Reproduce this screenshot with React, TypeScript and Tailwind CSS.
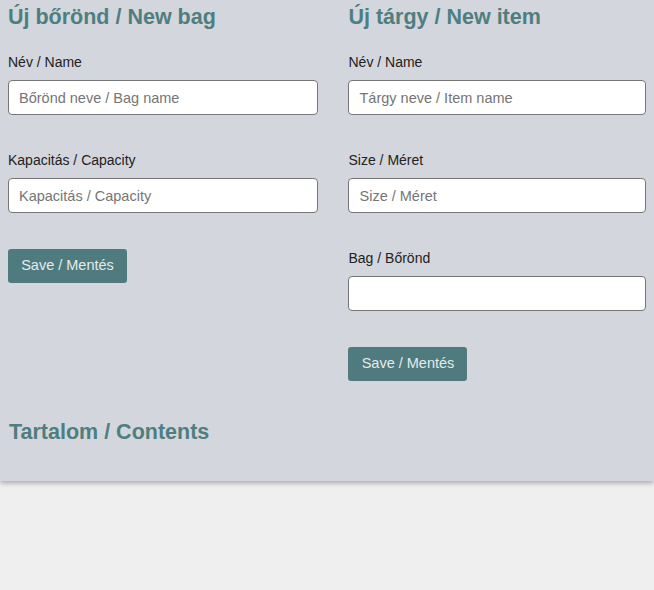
import React from "react";

const font = { fontFamily: '"Liberation Sans", Arial, sans-serif' };

function Label({ children }: { children: React.ReactNode }) {
  return <div className="h-[16px] text-[14px] leading-[16px] text-[#222]">{children}</div>;
}

function Input({ placeholder }: { placeholder?: string }) {
  return (
    <input
      placeholder={placeholder}
      className="mt-[10px] block h-[35px] w-full rounded-[4px] border border-[#767676] bg-white px-[10px] text-[14.5px] text-[#222] placeholder:text-[#757575] outline-none"
      style={font}
    />
  );
}

function Button() {
  return (
    <button
      className="block h-[34px] w-[119px] rounded-[3px] bg-[#4f7b7e] text-[14.5px] text-[#e3ecec]"
      style={font}
    >
      Save / Mentés
    </button>
  );
}

export default function App() {
  return (
    <div className="min-h-[590px] bg-[#efefef]" style={font}>
      <div className="bg-[#d3d6dc] pb-[36px] shadow-[0_2px_5px_rgba(0,0,0,0.3)]">
        <div className="flex px-[8px] pt-[4px]">
          <div className="w-[311px]">
            <h2 className="text-[21.5px] font-bold leading-[26px] text-[#4f7e80]">Új bőrönd / New bag</h2>
            <div className="mt-[24px]">
              <Label>Név / Name</Label>
              <Input placeholder="Bőrönd neve / Bag name" />
            </div>
            <div className="mt-[37px]">
              <Label>Kapacitás / Capacity</Label>
              <Input placeholder="Kapacitás / Capacity" />
            </div>
            <div className="mt-[36px]">
              <Button />
            </div>
          </div>
          <div className="ml-[30px] w-[298px]">
            <h2 className="text-[21.5px] font-bold leading-[26px] text-[#4f7e80]">Új tárgy / New item</h2>
            <div className="mt-[24px]">
              <Label>Név / Name</Label>
              <Input placeholder="Tárgy neve / Item name" />
            </div>
            <div className="mt-[37px]">
              <Label>Size / Méret</Label>
              <Input placeholder="Size / Méret" />
            </div>
            <div className="mt-[37px]">
              <Label>Bag / Bőrönd</Label>
              <Input />
            </div>
            <div className="mt-[36px]">
              <Button />
            </div>
          </div>
        </div>
        <h2 className="ml-[9px] mt-[38px] text-[21.5px] font-bold leading-[26px] text-[#4f7e80]">Tartalom / Contents</h2>
      </div>
    </div>
  );
}
